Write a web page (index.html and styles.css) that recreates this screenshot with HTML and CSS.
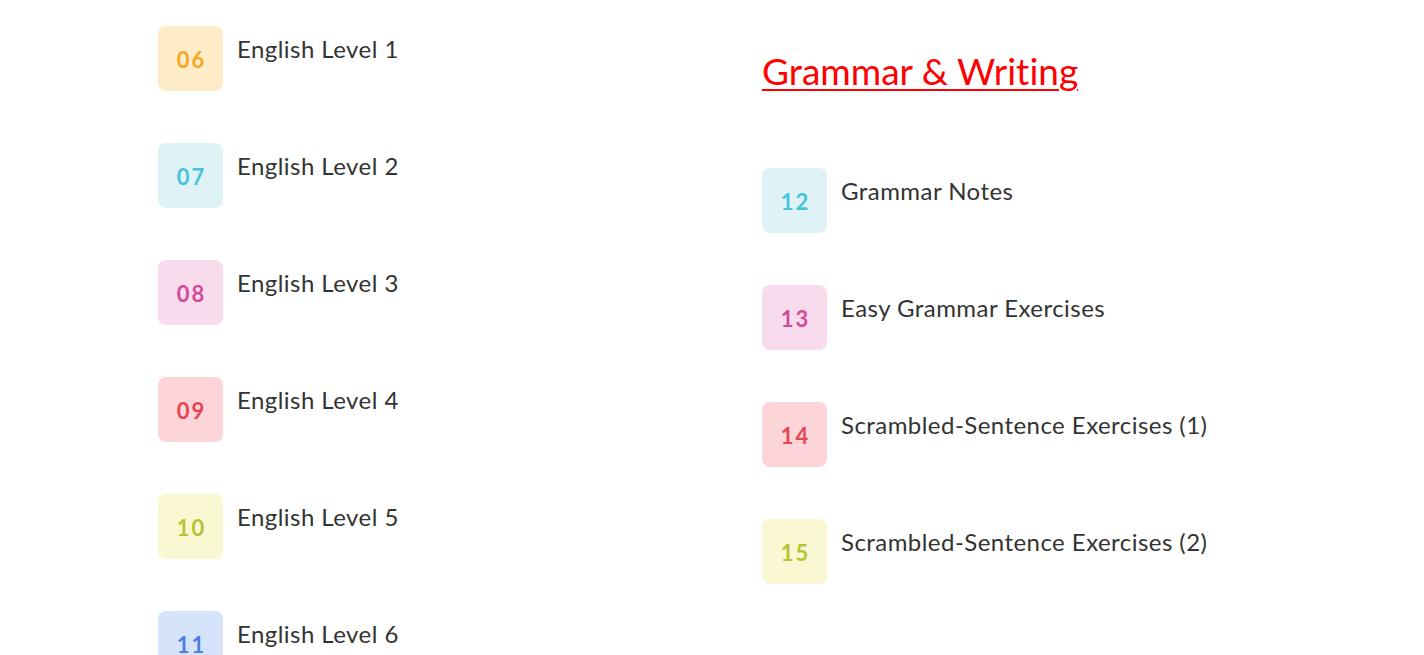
FILE: index.html
```html
<!DOCTYPE html>
<html>
<head>
<meta charset="utf-8">
<link rel="stylesheet" href="styles.css">
</head>
<body>
<div class="page">
  <div class="col left">
    <ul class="list">
      <li class="item"><span class="num c-orange">06</span><span class="label">English Level 1</span></li>
      <li class="item"><span class="num c-cyan">07</span><span class="label">English Level 2</span></li>
      <li class="item"><span class="num c-pink">08</span><span class="label">English Level 3</span></li>
      <li class="item"><span class="num c-red">09</span><span class="label">English Level 4</span></li>
      <li class="item"><span class="num c-lime">10</span><span class="label">English Level 5</span></li>
      <li class="item"><span class="num c-blue">11</span><span class="label">English Level 6</span></li>
    </ul>
  </div>
  <div class="col right">
    <h2 class="heading"><a href="#">Grammar &amp; Writing</a></h2>
    <ul class="list">
      <li class="item"><span class="num c-cyan">12</span><span class="label">Grammar Notes</span></li>
      <li class="item"><span class="num c-pink">13</span><span class="label">Easy Grammar Exercises</span></li>
      <li class="item"><span class="num c-red">14</span><span class="label">Scrambled-Sentence Exercises (1)</span></li>
      <li class="item"><span class="num c-lime">15</span><span class="label">Scrambled-Sentence Exercises (2)</span></li>
    </ul>
  </div>
</div>
</body>
</html>
```
FILE: styles.css
```css
html, body {
  margin: 0;
  padding: 0;
  background: #fff;
  overflow: hidden;
}
body {
  font-family: "Lato", "Liberation Sans", sans-serif;
  color: #333;
  font-variant-ligatures: none;
}
.page {
  display: flex;
  padding-left: 158px;
  height: 655px;
}
.col.left {
  width: 604px;
  padding-top: 26px;
}
.col.right {
  flex: 1;
}
.list {
  list-style: none;
  margin: 0;
  padding: 0;
  display: flex;
  flex-direction: column;
  gap: 52px;
}
.item {
  display: flex;
  align-items: flex-start;
  gap: 14px;
}
.num {
  flex: none;
  width: 65px;
  height: 65px;
  border-radius: 8px;
  display: flex;
  align-items: center;
  justify-content: center;
  font-size: 22px;
  font-weight: 700;
  letter-spacing: 2px;
  padding-top: 2px;
  padding-left: 2px;
  box-sizing: border-box;
}
.label {
  font-size: 24px;
  line-height: 28px;
  letter-spacing: 0.45px;
  padding-top: 9px;
  color: #333;
}
.heading {
  margin: 49px 0 75px;
  font-size: 37px;
  font-weight: 400;
  line-height: 44px;
}
.heading a {
  color: #ff0000;
  text-decoration: underline;
  text-decoration-thickness: 2px;
  text-underline-offset: 4px;
}
.c-orange { background: #feecc9; color: #f5a623; }
.c-cyan   { background: #dff3f7; color: #45c4dc; }
.c-pink   { background: #f8dced; color: #d14c98; }
.c-red    { background: #fdd5d9; color: #e54452; }
.c-lime   { background: #f9f8d3; color: #b7c234; }
.c-blue   { background: #d6e4fb; color: #4a80e2; }
```
